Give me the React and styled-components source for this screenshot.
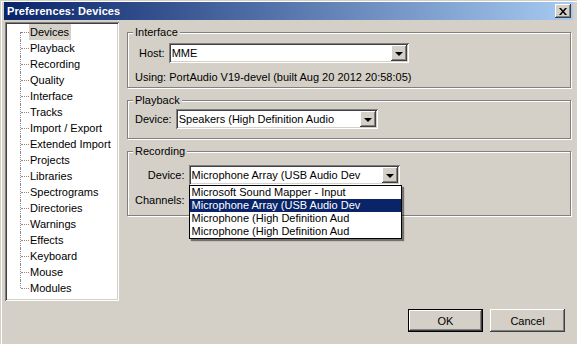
import styled, { createGlobalStyle, css } from 'styled-components';

const GlobalStyle = createGlobalStyle`
  html, body {
    margin: 0;
    padding: 0;
    background: #d4d0c8;
  }
  body {
    font-family: Tahoma, "Liberation Sans", Arial, sans-serif;
    font-size: 11px;
    color: #000;
  }
`;

const raised = css`
  box-shadow: inset -1px -1px 0 #404040, inset 1px 1px 0 #fff,
    inset -2px -2px 0 #808080, inset 2px 2px 0 #d4d0c8;
`;

const sunken = css`
  box-shadow: inset 1px 1px 0 #808080, inset -1px -1px 0 #fff,
    inset 2px 2px 0 #404040, inset -2px -2px 0 #d4d0c8;
`;

const Window = styled.div`
  width: 577px;
  height: 344px;
  box-sizing: border-box;
  padding: 2px 4px 0 4px;
  background: #d4d0c8;
  box-shadow: inset 1px 1px 0 #d4d0c8, inset 2px 2px 0 #fff;
  display: flex;
  flex-direction: column;
  overflow: hidden;
`;

const TitleBar = styled.div`
  height: 18px;
  flex: none;
  display: flex;
  align-items: center;
  justify-content: space-between;
  padding: 0 2px 0 3px;
  background: linear-gradient(to right, #0a246a, #a6caf0);
`;

const Title = styled.span`
  color: #fff;
  font-weight: bold;
  font-size: 11px;
  letter-spacing: 0.1px;
`;

const CloseButton = styled.button`
  width: 16px;
  height: 14px;
  padding: 0;
  border: none;
  background: #d4d0c8;
  display: flex;
  align-items: center;
  justify-content: center;
  ${raised}
`;

const Body = styled.div`
  flex: 1;
  display: flex;
  flex-direction: column;
  padding: 2px 2px 0 1px;
`;

const Main = styled.div`
  display: flex;
  align-items: flex-start;
`;

const Tree = styled.ul`
  list-style: none;
  margin: 0;
  width: 114px;
  height: 279px;
  box-sizing: border-box;
  padding: 2px 0 0 15px;
  background: #fff;
  ${sunken}
`;

const TreeRow = styled.li`
  height: 16px;
  display: flex;
  align-items: stretch;
`;

const Connector = styled.span`
  position: relative;
  width: 9px;
  flex: none;

  &::before {
    content: '';
    position: absolute;
    left: 0;
    top: ${(p) => (p.$first ? '8px' : '0')};
    bottom: ${(p) => (p.$last ? '8px' : '0')};
    border-left: 1px dotted #8a8a8a;
  }

  &::after {
    content: '';
    position: absolute;
    left: 1px;
    right: 0;
    top: 8px;
    border-top: 1px dotted #8a8a8a;
  }
`;

const TreeLabel = styled.span`
  display: flex;
  align-items: center;
  padding: 0 2px 0 1px;
  white-space: nowrap;
  background: ${(p) => (p.$selected ? '#d4d0c8' : 'transparent')};
`;

const Panels = styled.div`
  flex: 1;
  margin-left: 8px;
  padding-top: 10px;
  display: flex;
  flex-direction: column;
  gap: 12px;
`;

const Group = styled.div`
  border: 1px solid #808080;
  box-shadow: inset 1px 1px 0 #fff, 1px 1px 0 #fff;
  padding: 0 7px ${(p) => p.$bottom}px 7px;
  display: flex;
  flex-direction: column;
`;

const Caption = styled.span`
  align-self: flex-start;
  margin: -7px 0 0 -2px;
  padding: 0 2px;
  line-height: 13px;
  background: #d4d0c8;
`;

const FieldGrid = styled.div`
  margin-top: ${(p) => p.$top}px;
  display: grid;
  grid-template-columns: auto auto;
  justify-content: start;
  align-items: center;
  column-gap: 4px;
  row-gap: ${(p) => p.$rowGap || 0}px;
`;

const FieldLabel = styled.span`
  justify-self: end;
  line-height: 13px;
  padding-left: ${(p) => p.$indent || 0}px;
`;

const Note = styled.div`
  margin-top: 8px;
  line-height: 13px;
`;

const ComboWrap = styled.div`
  position: relative;
  width: ${(p) => p.$width}px;
`;

const Combo = styled.div`
  height: 20px;
  box-sizing: border-box;
  padding: 2px;
  display: flex;
  align-items: stretch;
  background: #fff;
  ${sunken}
`;

const ComboText = styled.span`
  flex: 1;
  display: flex;
  align-items: center;
  padding-left: 1px;
  white-space: nowrap;
  overflow: hidden;
`;

const ComboButton = styled.span`
  width: 16px;
  flex: none;
  display: flex;
  align-items: center;
  justify-content: center;
  background: #d4d0c8;
  ${raised}
`;

const Arrow = styled.span`
  width: 0;
  height: 0;
  margin-top: 1px;
  border-left: 4px solid transparent;
  border-right: 4px solid transparent;
  border-top: 4px solid #000;
`;

const DropList = styled.ul`
  position: absolute;
  z-index: 2;
  top: 100%;
  left: 0;
  width: 213px;
  margin: 0;
  padding: 0;
  list-style: none;
  box-sizing: border-box;
  border: 1px solid #000;
  background: #fff;
  box-shadow: 2px 2px 1px rgba(0, 0, 0, 0.45);
`;

const DropItem = styled.li`
  height: 13px;
  line-height: 13px;
  padding-left: 2px;
  white-space: nowrap;
  background: ${(p) => (p.$selected ? '#0a246a' : 'transparent')};
  color: ${(p) => (p.$selected ? '#fff' : '#000')};
`;

const ButtonRow = styled.div`
  margin-top: 8px;
  display: flex;
  justify-content: flex-end;
  gap: 7px;
  padding-right: 6px;
`;

const DialogButton = styled.button`
  width: 75px;
  height: 23px;
  padding: 0;
  font: inherit;
  color: #000;
  border: none;
  background: #d4d0c8;
  ${(p) =>
    p.$default
      ? css`
          box-shadow: inset 0 0 0 1px #000, inset -2px -2px 0 #404040,
            inset 2px 2px 0 #fff, inset -3px -3px 0 #808080;
        `
      : raised}
`;

const pages = [
  'Devices',
  'Playback',
  'Recording',
  'Quality',
  'Interface',
  'Tracks',
  'Import / Export',
  'Extended Import',
  'Projects',
  'Libraries',
  'Spectrograms',
  'Directories',
  'Warnings',
  'Effects',
  'Keyboard',
  'Mouse',
  'Modules',
];

const recordingDevices = [
  'Microsoft Sound Mapper - Input',
  'Microphone Array (USB Audio Dev',
  'Microphone (High Definition Aud',
  'Microphone (High Definition Aud',
];

function ComboBox({ value, width, children }) {
  return (
    <ComboWrap $width={width}>
      <Combo>
        <ComboText>{value}</ComboText>
        <ComboButton>
          <Arrow />
        </ComboButton>
      </Combo>
      {children}
    </ComboWrap>
  );
}

export default function App() {
  return (
    <>
      <GlobalStyle />
      <Window>
        <TitleBar>
          <Title>Preferences: Devices</Title>
          <CloseButton type="button" aria-label="Close">
            <svg width="8" height="7" viewBox="0 0 8 7">
              <path d="M0 0h2l2 2.5L6 0h2L5 3.5 8 7H6L4 4.5 2 7H0l3-3.5z" fill="#000" />
            </svg>
          </CloseButton>
        </TitleBar>
        <Body>
          <Main>
            <Tree>
              {pages.map((name, i) => (
                <TreeRow key={name}>
                  <Connector $first={i === 0} $last={i === pages.length - 1} />
                  <TreeLabel $selected={i === 0}>{name}</TreeLabel>
                </TreeRow>
              ))}
            </Tree>
            <Panels>
              <Group $bottom={3}>
                <Caption>Interface</Caption>
                <FieldGrid $top={4}>
                  <FieldLabel $indent={4}>Host:</FieldLabel>
                  <ComboBox value="MME" width={240} />
                </FieldGrid>
                <Note>Using: PortAudio V19-devel (built Aug 20 2012 20:58:05)</Note>
              </Group>
              <Group $bottom={9}>
                <Caption>Playback</Caption>
                <FieldGrid $top={2}>
                  <FieldLabel>Device:</FieldLabel>
                  <ComboBox value="Speakers (High Definition Audio" width={202} />
                </FieldGrid>
              </Group>
              <Group $bottom={5}>
                <Caption>Recording</Caption>
                <FieldGrid $top={7} $rowGap={5}>
                  <FieldLabel>Device:</FieldLabel>
                  <ComboBox value="Microphone Array (USB Audio Dev" width={211}>
                    <DropList>
                      {recordingDevices.map((d, i) => (
                        <DropItem key={i} $selected={i === 1}>
                          {d}
                        </DropItem>
                      ))}
                    </DropList>
                  </ComboBox>
                  <FieldLabel>Channels:</FieldLabel>
                  <ComboBox value="" width={120} />
                </FieldGrid>
              </Group>
            </Panels>
          </Main>
          <ButtonRow>
            <DialogButton type="button" $default>
              OK
            </DialogButton>
            <DialogButton type="button">Cancel</DialogButton>
          </ButtonRow>
        </Body>
      </Window>
    </>
  );
}
